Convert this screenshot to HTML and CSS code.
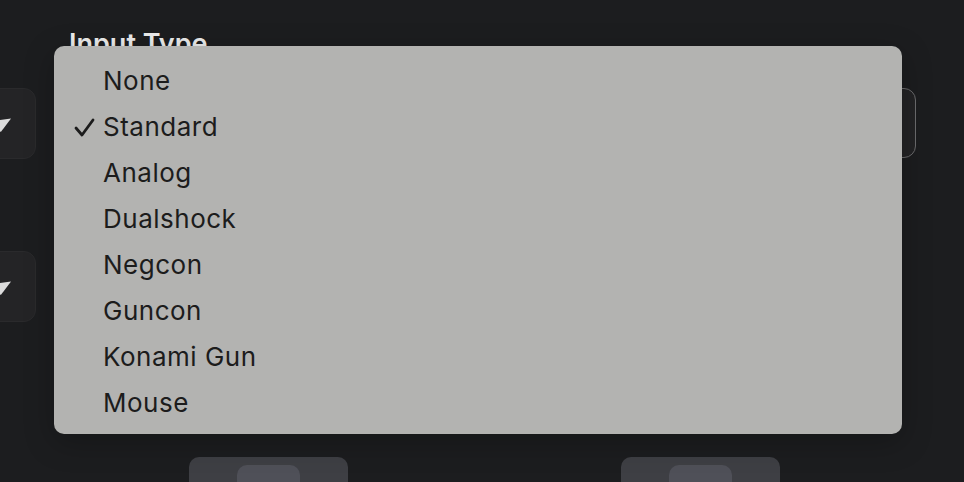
FILE: index.html
```html
<!DOCTYPE html>
<html>
<head>
<meta charset="utf-8">
<link rel="stylesheet" href="styles.css">
</head>
<body>
<div class="screen">
  <div class="side">
    <div class="side-box"><span class="caret"></span></div>
    <div class="side-box"><span class="caret"></span></div>
  </div>
  <div class="main">
    <div class="label">Input Type</div>
    <div class="field"></div>
    <div class="pads">
      <div class="pad"><div class="knob"></div></div>
      <div class="pad"><div class="knob"></div></div>
    </div>
  </div>
</div>
<ul class="menu">
  <li class="item">None</li>
  <li class="item checked"><svg class="check" width="22" height="22" viewBox="0 0 22 22"><polyline points="2,12 8,19 19,4" fill="none" stroke="#1c1c1c" stroke-width="2.8" stroke-linecap="round" stroke-linejoin="round"/></svg>Standard</li>
  <li class="item">Analog</li>
  <li class="item">Dualshock</li>
  <li class="item">Negcon</li>
  <li class="item">Guncon</li>
  <li class="item">Konami Gun</li>
  <li class="item">Mouse</li>
</ul>
</body>
</html>
```

FILE: styles.css
```css
html, body {
  margin: 0;
  padding: 0;
  overflow: hidden;
}
body {
  width: 964px;
  height: 482px;
  background: #1c1d1f;
  font-family: Inter, "Noto Sans", sans-serif;
  position: relative;
}
.screen {
  display: flex;
  height: 482px;
  overflow: hidden;
}
.side {
  margin-left: -60px;
  width: 96px;
  padding-top: 88px;
  display: flex;
  flex-direction: column;
  gap: 92px;
}
.side-box {
  height: 69px;
  border: 1px solid #2a2a2c;
  border-radius: 12px;
  background: #242426;
  position: relative;
}
.caret {
  position: absolute;
  left: 47px;
  top: 31px;
  width: 0;
  height: 0;
  border-left: 12px solid transparent;
  border-right: 12px solid transparent;
  border-top: 12px solid #dcdcdc;
  transform: rotate(-8deg);
}
.main {
  margin-left: 33px;
  width: 847px;
}
.label {
  color: #ececec;
  font-size: 27px;
  font-weight: 600;
  line-height: 26px;
  margin-top: 31px;
  height: 26px;
  white-space: nowrap;
}
.field {
  margin-top: 31px;
  height: 68px;
  border: 1.5px solid #6b6b6d;
  border-radius: 12px;
  background: #232325;
}
.pads {
  display: flex;
  gap: 273px;
  padding-left: 120px;
  margin-top: 299px;
}
.pad {
  width: 159px;
  height: 60px;
  border-radius: 10px;
  background: #3e3f44;
  padding-top: 8px;
  box-sizing: border-box;
}
.knob {
  margin-left: 48px;
  width: 63px;
  height: 40px;
  border-radius: 10px;
  background: #4f5058;
}
.menu {
  position: absolute;
  left: 54px;
  top: 46px;
  width: 848px;
  height: 388px;
  box-sizing: border-box;
  margin: 0;
  padding: 12px 0 8px 0;
  list-style: none;
  background: #b3b3b1;
  border-radius: 10px;
  box-shadow: 0 8px 30px rgba(0, 0, 0, 0.25);
}
.item {
  height: 46px;
  line-height: 46px;
  padding-left: 49px;
  font-size: 26px;
  letter-spacing: 0.5px;
  color: #1c1c1c;
  position: relative;
  white-space: nowrap;
}
.check {
  position: absolute;
  left: 20px;
  top: 12px;
}
```
